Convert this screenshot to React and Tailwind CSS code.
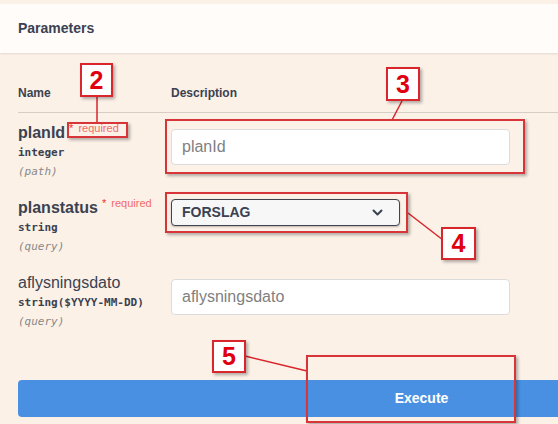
import React from "react";

const params = [
  { name: "planId", required: true, type: "integer", place: "(path)", kind: "input" },
  { name: "planstatus", required: true, type: "string", place: "(query)", kind: "select" },
  { name: "aflysningsdato", required: false, type: "string($YYYY-MM-DD)", place: "(query)", kind: "input" },
];

const Marker = ({ n, className }) => (
  <div
    className={`absolute flex items-center justify-center bg-white border-2 border-[#d8262c] text-[#e00010] text-[25px] font-bold leading-none shadow-[2px_2px_3px_rgba(0,0,0,0.3)] ${className}`}
  >
    {n}
  </div>
);

const Frame = ({ className }) => (
  <div
    className={`absolute border-2 border-[#d8353a] shadow-[2px_2px_3px_rgba(0,0,0,0.3)] ${className}`}
  />
);

const ParamRow = ({ p }) => (
  <div className="flex pt-[10px] pb-[6px]">
    <div className="w-[153px] shrink-0">
      <div className={`h-[20px] leading-[20px] text-[16px] text-[#3b4151] whitespace-nowrap ${p.required ? "font-bold" : ""}`}>
        {p.name}
        {p.required && (
          <>
            <span className="relative -top-[6px] ml-[4px] text-[11px] font-normal text-[#ee3030]">*</span>
            <span className="relative -top-[6px] ml-[5px] text-[11px] font-normal text-[#f36a6a]">required</span>
          </>
        )}
      </div>
      <div className="mt-[2px] h-[16px] leading-[16px] text-[11px] font-semibold text-[#3b4151] font-['DejaVu_Sans_Mono',monospace]">
        {p.type}
      </div>
      <div className="mt-[1px] h-[20px] leading-[20px] text-[11px] italic text-[#888] font-['DejaVu_Sans_Mono',monospace]">
        {p.place}
      </div>
    </div>
    <div className={p.kind === "select" ? "pt-[1px]" : "pt-[6px]"}>
      {p.kind === "select" ? (
        <div className="w-[229px] h-[27px] flex items-center justify-between pl-[10px] pr-[16px] border border-[#41444e] rounded-[4px] bg-[#f7f7f7] shadow-[0_1px_2px_rgba(0,0,0,0.25)]">
          <span className="text-[14px] font-bold text-[#3b4151]">FORSLAG</span>
          <svg width="11" height="7" viewBox="0 0 11 7">
            <path d="M1.5 1.5l4 4 4-4" fill="none" stroke="#3b4151" strokeWidth="2" strokeLinecap="round" strokeLinejoin="round" />
          </svg>
        </div>
      ) : (
        <input
          readOnly
          placeholder={p.name}
          className="w-[339px] h-[36px] px-[10px] border border-[#dcdcdc] rounded-[4px] bg-white text-[16px] outline-none placeholder:text-[#7f7f7f] font-['Liberation_Sans',Arial,sans-serif]"
        />
      )}
    </div>
  </div>
);

export default function App() {
  return (
    <div className="relative w-[558px] h-[424px] overflow-hidden bg-[#fbf1e7] font-['Liberation_Sans',Arial,sans-serif]">
      <div className="pt-[4px]">
        <div className="h-[49px] px-[18px] flex items-center bg-[#fffcf9] shadow-[0_1px_2px_rgba(0,0,0,0.1)]">
          <h4 className="text-[14px] font-bold text-[#3b4151]">Parameters</h4>
        </div>

        <div className="pl-[18px]">
          <div className="flex h-[60px] items-end pb-[10px] border-b border-[#d6cdc5] text-[12px] font-bold text-[#3b4151]">
            <div className="w-[153px]">Name</div>
            <div>Description</div>
          </div>

          {params.map((p) => (
            <ParamRow key={p.name} p={p} />
          ))}

          <button className="mt-[42px] w-[807px] h-[37px] rounded-[4px] bg-[#4990e2] text-white text-[14px] font-bold">
            Execute
          </button>
        </div>
      </div>

      {/* annotation overlay */}
      <svg className="absolute inset-0 pointer-events-none" width="558" height="424">
        <g stroke="#d8262c" strokeWidth="1.5" fill="none">
          <path d="M97 97 L97 122" />
          <path d="M402 101 L392 120" />
          <path d="M408 213 L443 240" />
          <path d="M245 356 L307 371" />
        </g>
      </svg>
      <Frame className="left-[67px] top-[122px] w-[61px] h-[16px]" />
      <Frame className="left-[165px] top-[119px] w-[360px] h-[55px]" />
      <Frame className="left-[165px] top-[192px] w-[243px] h-[41px]" />
      <Frame className="left-[306px] top-[355px] w-[210px] h-[68px]" />
      <Marker n="2" className="left-[80px] top-[63px] w-[33px] h-[34px]" />
      <Marker n="3" className="left-[386px] top-[67px] w-[34px] h-[34px]" />
      <Marker n="4" className="left-[441px] top-[227px] w-[35px] h-[33px]" />
      <Marker n="5" className="left-[212px] top-[340px] w-[34px] h-[33px]" />
    </div>
  );
}
